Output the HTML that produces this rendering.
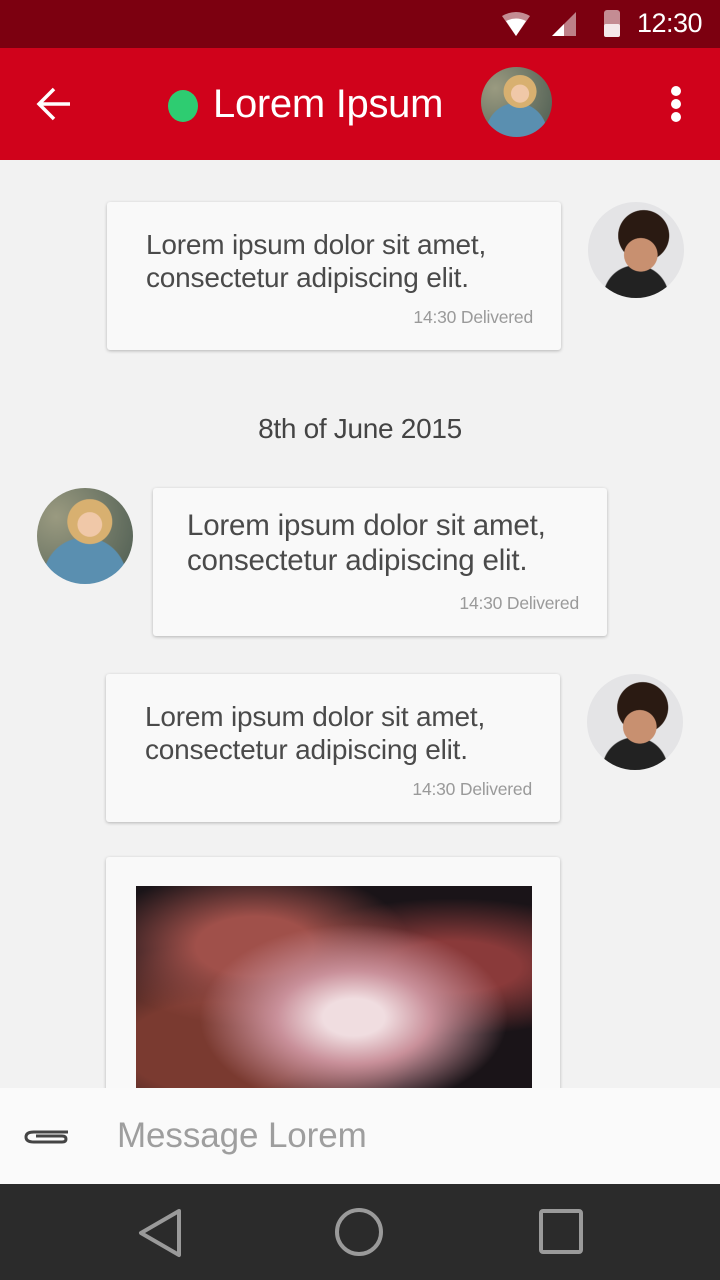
<!DOCTYPE html>
<html><head><meta charset="utf-8"><style>
*{margin:0;padding:0;box-sizing:border-box}
body{width:720px;height:1280px;position:relative;overflow:hidden;background:#f2f2f2;font-family:"Liberation Sans",sans-serif}
.abs{position:absolute}
.card{position:absolute;background:#f9f9f9;border-radius:3px;box-shadow:0 1px 3px rgba(0,0,0,.25)}
.msg{position:absolute;color:#4a4a4a;font-size:28px;line-height:33px;letter-spacing:-0.2px}
.meta{position:absolute;right:28px;bottom:22px;color:#9a9a9a;font-size:17.5px;letter-spacing:-0.2px}
.man{position:absolute;width:96px;height:96px;border-radius:50%;background:radial-gradient(circle at 55% 55%,#c89070 0 22%,transparent 23%),radial-gradient(circle at 58% 35%,#2a1a12 0 30%,transparent 31%),radial-gradient(circle at 50% 100%,#222 0 30%,transparent 31%),#e4e4e6;overflow:hidden}
.woman{position:absolute;border-radius:50%;background:radial-gradient(circle at 55% 38%,#f0c8a8 0 15%,transparent 16%),radial-gradient(circle at 55% 35%,#d8b070 0 27%,transparent 28%),radial-gradient(circle at 50% 95%,#5a8fb0 0 40%,transparent 41%),radial-gradient(circle at 20% 30%,#9a9a80,#4a5a50)}
</style></head><body>
<div class="abs" style="left:0;top:0;width:720px;height:48px;background:#7c0010"></div>
<svg class="abs" style="left:500px;top:10px" width="200" height="30">
<path d="M2 6 Q16 -2 30 6 L16 26 Z" fill="#fff" opacity=".55"/><path d="M6 11 Q16 6 26 11 L16 26Z" fill="#fff"/>
<path d="M52 26 L76 2 L76 26Z" fill="#fff" opacity=".5"/><path d="M52 26 L64 14 L64 26Z" fill="#fff"/>
<rect x="104" y="0" width="16" height="27" rx="3" fill="#fff" opacity=".55"/><rect x="104" y="14" width="16" height="13" rx="2" fill="#f4e8ea"/>
</svg>
<div class="abs" style="left:637px;top:8px;color:#fff;font-size:27px;letter-spacing:-0.5px">12:30</div>
<div class="abs" style="left:0;top:48px;width:720px;height:112px;background:#d0021b"></div>
<svg class="abs" style="left:36px;top:86px" width="36" height="36"><path d="M4 18 H34 M18 3 L3 18 L18 33" stroke="#fff" stroke-width="3.5" fill="none"/></svg>
<div class="abs" style="left:168px;top:90px;width:30px;height:32px;border-radius:50%;background:#2ecc71"></div>
<div class="abs" style="left:213px;top:82px;color:#fff;font-size:40px;letter-spacing:-0.3px">Lorem Ipsum</div>
<div class="woman" style="left:481px;top:67px;width:71px;height:70px"></div>
<div class="abs" style="left:671px;top:86px;width:10px;height:10px;border-radius:50%;background:#fff;box-shadow:0 13px 0 #fff,0 26px 0 #fff"></div>

<div class="card" style="left:107px;top:202px;width:454px;height:148px"><div class="msg" style="left:39px;top:26px">Lorem ipsum dolor sit amet,<br>consectetur adipiscing elit.</div><div class="meta">14:30 Delivered</div></div>
<div class="man" style="left:588px;top:202px"></div>
<div class="abs" style="left:0;width:720px;top:413px;text-align:center;color:#444;font-size:28px;letter-spacing:-0.3px">8th of June 2015</div>
<div class="woman" style="left:37px;top:488px;width:96px;height:96px"></div>
<div class="card" style="left:153px;top:488px;width:454px;height:148px"><div class="msg" style="left:34px;top:20px;font-size:29.5px;line-height:35px">Lorem ipsum dolor sit amet,<br>consectetur adipiscing elit.</div><div class="meta">14:30 Delivered</div></div>
<div class="card" style="left:106px;top:674px;width:454px;height:148px"><div class="msg" style="left:39px;top:26px">Lorem ipsum dolor sit amet,<br>consectetur adipiscing elit.</div><div class="meta">14:30 Delivered</div></div>
<div class="man" style="left:587px;top:674px"></div>
<div class="card" style="left:106px;top:857px;width:454px;height:260px"></div>
<div class="abs" style="left:136px;top:886px;width:396px;height:202px;background:radial-gradient(ellipse at 55% 65%,#f0dde0 0 10%,#c9909a 25%,transparent 50%),radial-gradient(ellipse at 30% 30%,#a0504a 0 15%,transparent 40%),radial-gradient(ellipse at 80% 40%,#8a3a3a 0 15%,transparent 40%),radial-gradient(ellipse at 20% 80%,#7a3a30 0 20%,transparent 45%),#1a1418"></div>

<div class="abs" style="left:0;top:1088px;width:720px;height:96px;background:#fafafa"></div>
<svg class="abs" style="left:24px;top:1126px" width="46" height="22"><path d="M44 6 H10 Q2 6 2 11 Q2 16 10 16 H38 Q42 16 42 13 Q42 10 38 10 H12" stroke="#444" stroke-width="3" fill="none"/></svg>
<div class="abs" style="left:117px;top:1116px;color:#9e9e9e;font-size:35px;letter-spacing:-0.1px">Message Lorem</div>
<div class="abs" style="left:0;top:1184px;width:720px;height:96px;background:#2b2b2b"></div>
<svg class="abs" style="left:0;top:1184px" width="720" height="96">
<path d="M179 27 L141 49 L179 71 Z" stroke="#9a9a9a" stroke-width="4" fill="none" stroke-linejoin="round"/>
<ellipse cx="359" cy="48" rx="22" ry="22" stroke="#9a9a9a" stroke-width="4" fill="none"/>
<rect x="541" y="27" width="40" height="41" rx="2" stroke="#9a9a9a" stroke-width="4" fill="none"/>
</svg>
</body></html>
